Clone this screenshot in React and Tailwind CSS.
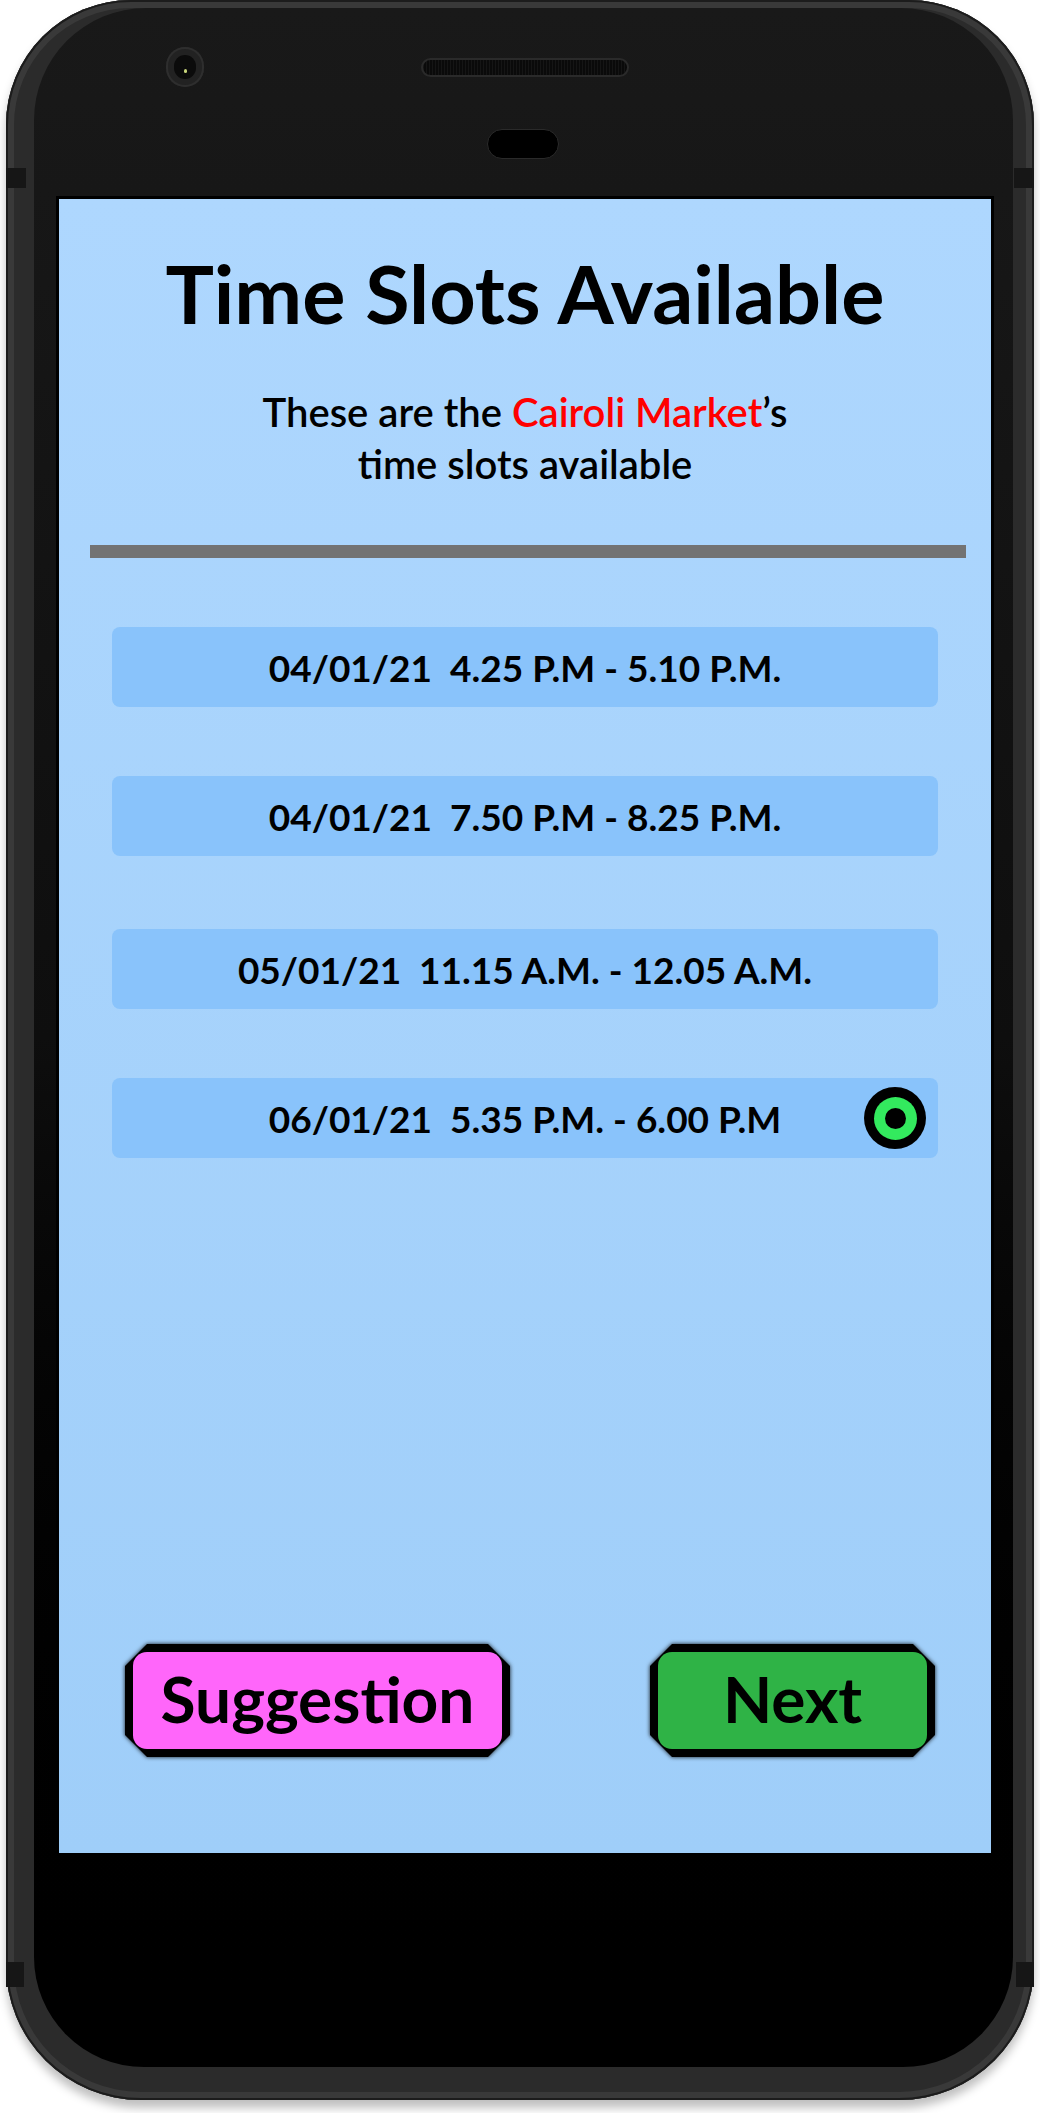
import React from "react";

const slots = [
  { label: "04/01/21  4.25 P.M - 5.10 P.M.", gap: "mt-0" },
  { label: "04/01/21  7.50 P.M - 8.25 P.M.", gap: "mt-[69px]" },
  { label: "05/01/21  11.15 A.M. - 12.05 A.M.", gap: "mt-[73px]" },
  { label: "06/01/21  5.35 P.M. - 6.00 P.M", gap: "mt-[69px]" },
];

function SlotRow({ label, selected, gap }) {
  return (
    <div className={`${gap} relative flex h-[80px] items-center justify-center rounded-[8px] bg-[#89c3fb]`}>
      <span className="whitespace-pre font-['Lato',sans-serif] text-[37px] font-bold leading-none text-black">
        {label}
      </span>
      {selected && (
        <span className="absolute right-[12px] top-1/2 flex h-[62px] w-[62px] -translate-y-1/2 items-center justify-center rounded-full bg-black">
          <span className="flex h-[43px] w-[43px] items-center justify-center rounded-full bg-[#33ea5e]">
            <span className="h-[21px] w-[21px] rounded-full bg-black" />
          </span>
        </span>
      )}
    </div>
  );
}

function OctButton({ children, fill, width }) {
  return (
    <div className="drop-shadow-[0_0_2px_rgba(0,0,0,0.9)]">
      <div
        className={`${width} h-[113px] bg-black p-[8px] [clip-path:polygon(22px_0,calc(100%_-_22px)_0,100%_22px,100%_calc(100%_-_22px),calc(100%_-_22px)_100%,22px_100%,0_calc(100%_-_22px),0_22px)]`}
      >
        <div
          className={`${fill} flex h-full w-full items-center justify-center rounded-[14px] font-['Lato',sans-serif] text-[64px] font-bold leading-none text-black`}
        >
          <span className="-mt-[4px]">{children}</span>
        </div>
      </div>
    </div>
  );
}

export default function App() {
  return (
    <div className="h-[2113px] w-[1040px] bg-white">
      <div className="relative ml-[6px] h-[2100px] w-[1028px] rounded-t-[125px] rounded-b-[135px] bg-[#2b2b2b] pt-[8px] pl-[28px] pr-[21px] pb-[33px] shadow-[0_8px_10px_rgba(0,0,0,0.25),inset_0_0_0_2px_#1c1c1c,inset_0_0_0_8px_#393939]">
        {/* side keys */}
        <div className="absolute left-0 top-[168px] h-[20px] w-[20px] bg-[#161616]" />
        <div className="absolute right-0 top-[168px] h-[20px] w-[20px] bg-[#161616]" />
        <div className="absolute left-0 top-[1962px] h-[25px] w-[18px] bg-[#161616]" />
        <div className="absolute right-0 top-[1962px] h-[25px] w-[18px] bg-[#161616]" />

        <div className="flex h-full flex-col rounded-t-[112px] rounded-b-[110px] bg-gradient-to-b from-[#191919] via-[#0e0e0e] to-black">
          {/* top bezel */}
          <div className="flex h-[188px] flex-col">
            <div className="mt-[39px] flex items-center">
              <div className="ml-[132px] flex h-[40px] w-[38px] items-center justify-center rounded-full bg-[#222] shadow-[inset_0_0_0_2px_#2e2e2e]">
                <div className="relative h-[24px] w-[22px] rounded-full bg-[#0b0b0b]">
                  <div className="absolute left-[10px] top-[14px] h-[4px] w-[3px] rounded-full bg-[#c8d57a]" />
                </div>
              </div>
              <div className="ml-[217px] h-[19px] w-[208px] rounded-full border-2 border-[#2a2a2a] bg-[#0c0c0c] bg-[repeating-linear-gradient(90deg,#151515_0,#151515_1px,#0a0a0a_1px,#0a0a0a_3px)]" />
            </div>
            <div className="mt-[42px] flex justify-center pr-[2px]">
              <div className="h-[30px] w-[72px] rounded-full border border-[#2a2a2a] bg-black" />
            </div>
          </div>

          {/* screen */}
          <div className="mr-[19px] ml-[22px] border-[3px] border-black">
            <div className="flex h-[1654px] flex-col bg-gradient-to-b from-[#aed7fe] to-[#9fcef9]">
              <h1 className="mt-[53px] text-center font-['Lato',sans-serif] text-[81px] font-bold leading-none text-black">
                Time Slots Available
              </h1>
              <p className="mt-[53px] text-center font-['Lato',sans-serif] text-[40px] font-semibold leading-[52px] text-black">
                These are the <span className="text-[#ff0000]">Cairoli Market</span>’s
                <br />
                time slots available
              </p>
              <div className="mt-[55px] ml-[31px] mr-[25px] h-[13px] bg-[#737373]" />

              <div className="mx-[53px] mt-[69px] flex flex-col">
                {slots.map((s, i) => (
                  <SlotRow key={s.label} label={s.label} gap={s.gap} selected={i === 3} />
                ))}
              </div>

              <div className="mt-auto mb-[96px] flex items-center justify-between pl-[66px] pr-[56px]">
                <OctButton fill="bg-[#ff66fa]" width="w-[385px]">
                  Suggestion
                </OctButton>
                <OctButton fill="bg-[#2fb346]" width="w-[285px]">
                  Next
                </OctButton>
              </div>
            </div>
          </div>
        </div>
      </div>
    </div>
  );
}
